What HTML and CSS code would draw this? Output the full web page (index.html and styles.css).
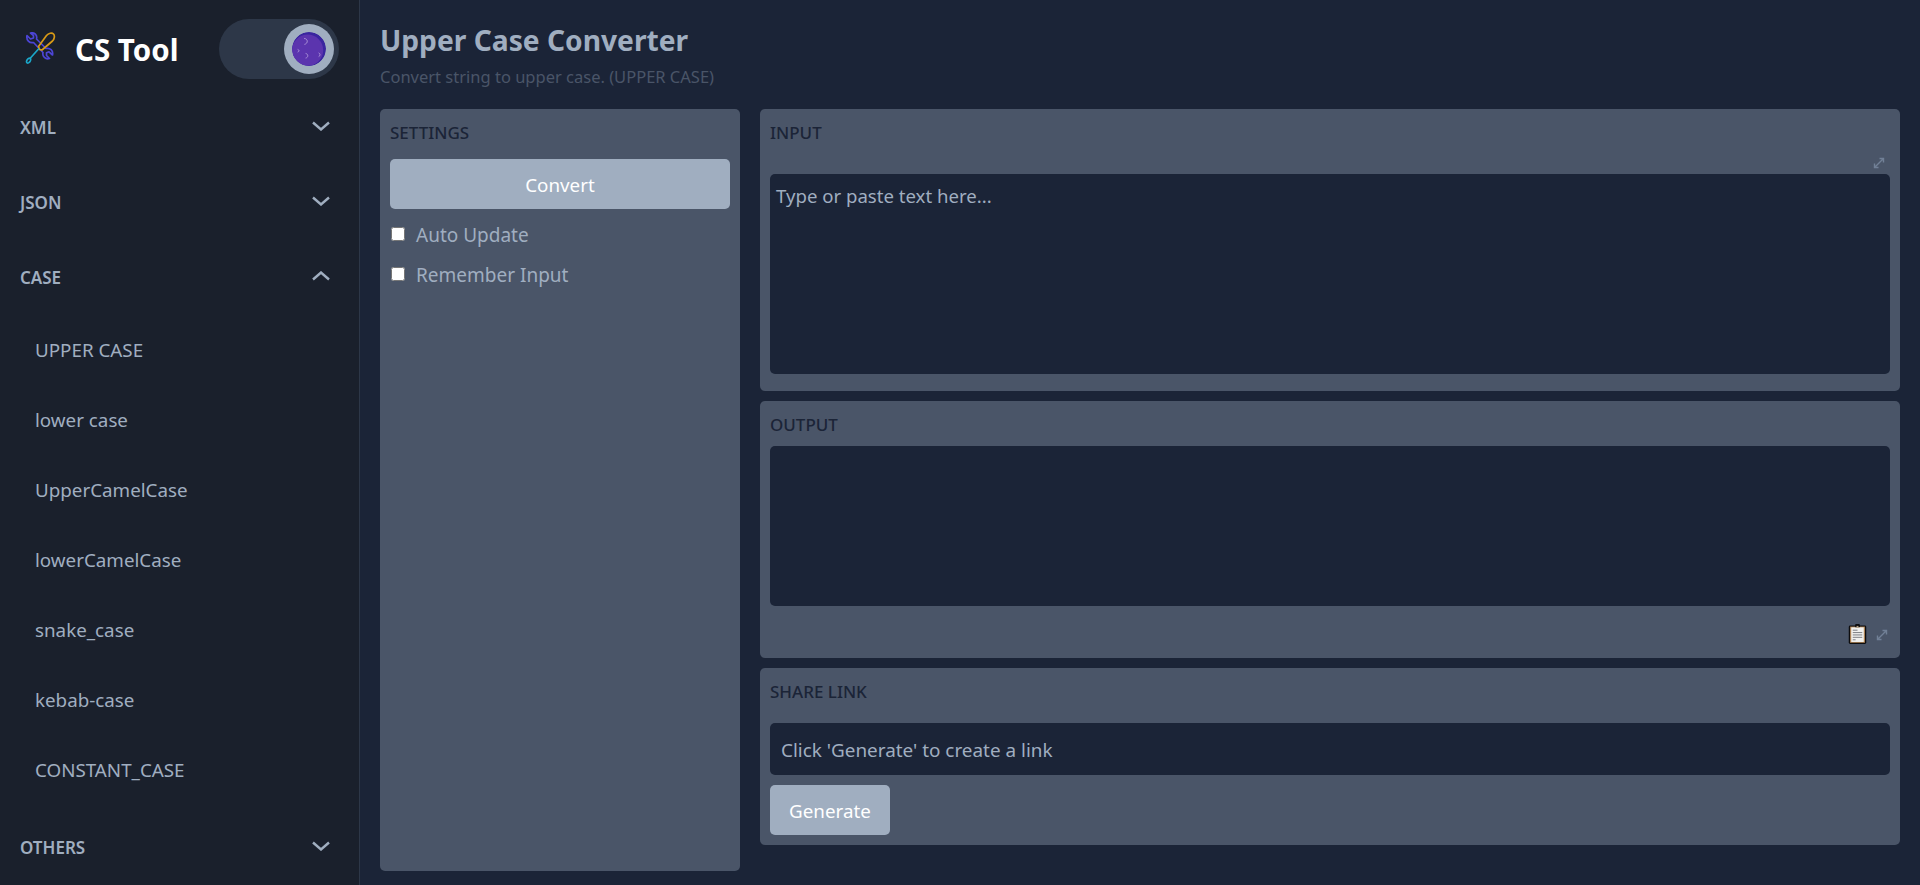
FILE: index.html
```html
<!DOCTYPE html>
<html lang="en">
<head>
    <meta charset="UTF-8">
    <meta name="viewport" content="width=device-width, initial-scale=1.0">
    <title>Upper Case Converter</title>
    <link rel="stylesheet" href="styles.css">
</head>
<body>

    <!-- Sidebar -->
    <aside class="sidebar">
        <div class="brand">
            <svg class="brand-icon" viewBox="0 0 32 34" fill="none" stroke-width="1.7" stroke-linecap="round" stroke-linejoin="round">
                <path d="M3 3.5 L6.5 7 L9.5 6 L9.5 3.5 L6.5 1 C10.5 0 13.5 3 12.5 7 L22 16.5 C26 15.5 29.5 18.5 28.5 23 L25 19.8 L22.5 20.8 L22.5 23.5 L25.5 26.5 C21.5 27.8 18 24.5 19 20.5 L9.5 10.5 C5.5 11.5 2 8 3 3.5 Z" stroke="#4c45d6"/>
                <path d="M15.5 17.5 L14.5 14.5 L22.5 3.5 C24.5 1 28 0.5 29.5 2 C31 3.5 30.5 7 28.5 9 L18 18 Z" stroke="#d99a16"/>
                <path d="M14.5 17 L6 26.5 M6 26 C4.5 26 2.5 28 2.5 29.5 C2.5 31 4 31.5 5 30.5 C6.5 29.5 7 27.5 6.5 26.5" stroke="#1ba6c9"/>
            </svg>
            <span class="brand-name">CS Tool</span>
            <div class="theme-toggle">
                <div class="knob">
                    <svg class="moon" viewBox="0 0 34 34">
                        <circle cx="17" cy="17" r="17" fill="#3a259f"/>
                        <circle cx="15.6" cy="18.2" r="15.6" fill="#5b34ae"/>
                        <g fill="none" stroke="#a88fd6" stroke-width="1" stroke-linecap="round">
                            <path d="M12.5 6.5 C16 6.5 16.5 11.5 12.8 12.3"/>
                            <path d="M6 17.5 C7.5 18 7.5 19.5 6 20"/>
                            <path d="M14 21.5 C16.5 22 16.5 25.5 14 26"/>
                            <path d="M27 21 C28.5 21.5 28.5 24 27 24.5"/>
                        </g>
                    </svg>
                </div>
            </div>
        </div>

        <nav>
            <div class="nav-head"><span>XML</span>
                <svg class="chev" viewBox="0 0 18 10"><path d="M1 1.5 L9 8.5 L17 1.5"/></svg>
            </div>
            <div class="nav-head"><span>JSON</span>
                <svg class="chev" viewBox="0 0 18 10"><path d="M1 1.5 L9 8.5 L17 1.5"/></svg>
            </div>
            <div class="nav-head"><span>CASE</span>
                <svg class="chev" viewBox="0 0 18 10"><path d="M1 8.5 L9 1.5 L17 8.5"/></svg>
            </div>
            <ul class="nav-list">
                <li><a href="#">UPPER CASE</a></li>
                <li><a href="#">lower case</a></li>
                <li><a href="#">UpperCamelCase</a></li>
                <li><a href="#">lowerCamelCase</a></li>
                <li><a href="#">snake_case</a></li>
                <li><a href="#">kebab-case</a></li>
                <li><a href="#">CONSTANT_CASE</a></li>
            </ul>
            <div class="nav-head nav-head-last"><span>OTHERS</span>
                <svg class="chev" viewBox="0 0 18 10"><path d="M1 1.5 L9 8.5 L17 1.5"/></svg>
            </div>
        </nav>
    </aside>

    <!-- Main content -->
    <main class="content">
        <h1>Upper Case Converter</h1>
        <p class="subtitle">Convert string to upper case. (UPPER CASE)</p>

        <div class="tool-grid">
            <section class="panel settings">
                <h2>SETTINGS</h2>
                <button class="btn btn-wide" type="button">Convert</button>
                <label class="check"><input type="checkbox">Auto Update</label>
                <label class="check"><input type="checkbox">Remember Input</label>
            </section>

            <div class="stack">
                <section class="panel input-panel">
                    <h2>INPUT</h2>
                    <div class="tool-row tool-row-top">
                        <svg class="expand" viewBox="0 0 12 12"><path d="M1.5 10.5 L10.5 1.5 M6.5 1.5 H10.5 V5.5 M1.5 6.5 V10.5 H5.5"/></svg>
                    </div>
                    <textarea class="field input-text" placeholder="Type or paste text here..."></textarea>
                </section>

                <section class="panel output-panel">
                    <h2>OUTPUT</h2>
                    <textarea class="field output-text"></textarea>
                    <div class="tool-row tool-row-bottom">
                        <svg class="clipboard" viewBox="0 0 20 22">
                            <rect x="0.8" y="2" width="18.4" height="19.4" rx="1.5" fill="#0d0d0f"/>
                            <rect x="2.2" y="3.2" width="15.6" height="17" fill="#b98d5c"/>
                            <rect x="3.4" y="4" width="13.2" height="15.4" fill="#f1f1ef"/>
                            <rect x="7.5" y="0.5" width="5" height="3.5" rx="1" fill="#0d0d0f"/>
                            <rect x="9" y="2.5" width="2" height="2" fill="#b9a58a"/>
                            <path d="M5 7 H10 M5 9.5 H15 M5 12 H15 M5 14.5 H15" stroke="#77797d" stroke-width="1"/>
                            <path d="M5 17 H8" stroke="#9a9da3" stroke-width="1.4"/>
                        </svg>
                        <svg class="expand" viewBox="0 0 12 12"><path d="M1.5 10.5 L10.5 1.5 M6.5 1.5 H10.5 V5.5 M1.5 6.5 V10.5 H5.5"/></svg>
                    </div>
                </section>

                <section class="panel share-panel">
                    <h2>SHARE LINK</h2>
                    <input class="field share-link" type="text" readonly value="Click 'Generate' to create a link">
                    <button class="btn btn-small" type="button">Generate</button>
                </section>
            </div>
        </div>
    </main>

</body>
</html>
```

FILE: styles.css
```css
* {
    margin: 0;
    padding: 0;
    box-sizing: border-box;
}

body {
    display: flex;
    height: 885px;
    overflow: hidden;
    font-family: "Noto Sans", "Open Sans", sans-serif;
    background-color: #1b2437;
    color: #a0aec0;
}

/* Sidebar */
.sidebar {
    width: 360px;
    flex-shrink: 0;
    background-color: #1a202c;
    border-right: 1px solid #2d3748;
    overflow: hidden;
}

.brand {
    display: flex;
    align-items: center;
    height: 90px;
    padding-top: 8px;
    padding-left: 24px;
}

.brand-icon {
    width: 32px;
    height: 34px;
    margin-right: 19px;
}

.brand-name {
    font-size: 29.5px;
    font-weight: 700;
    color: #fff;
}

.theme-toggle {
    display: flex;
    align-items: center;
    justify-content: flex-end;
    width: 120px;
    height: 60px;
    margin-left: auto;
    margin-right: 20px;
    padding-right: 5px;
    border-radius: 30px;
    background-color: #2d3748;
}

.knob {
    display: flex;
    align-items: center;
    justify-content: center;
    width: 50px;
    height: 50px;
    border-radius: 50%;
    background-color: #a0aec0;
}

.moon {
    width: 34px;
    height: 34px;
    border-radius: 50%;
}

.nav-head {
    display: flex;
    align-items: center;
    justify-content: space-between;
    height: 75px;
    padding: 0 29px 0 20px;
    font-size: 17px;
    font-weight: 600;
}

.nav-head-last {
    margin-top: 5px;
}

.chev {
    width: 18px;
    height: 10px;
    margin-bottom: 4px;
    fill: none;
    stroke: #a0aec0;
    stroke-width: 2.4;
}

.nav-list {
    list-style-type: none;
}

.nav-list li {
    height: 70px;
    line-height: 70px;
    padding-left: 35px;
    font-size: 18.8px;
}

.nav-list a {
    color: #a0aec0;
    text-decoration: none;
}

/* Main content */
.content {
    flex: 1;
    padding: 20px;
}

h1 {
    font-size: 28.2px;
    font-weight: 700;
    line-height: 40px;
    color: #a0aec0;
}

.subtitle {
    margin-top: 5px;
    font-size: 16.5px;
    line-height: 24px;
    color: #4a5568;
}

.tool-grid {
    display: grid;
    grid-template-columns: 360px 1fr;
    gap: 20px;
    margin-top: 20px;
}

.stack {
    display: flex;
    flex-direction: column;
    gap: 10px;
}

.panel {
    padding: 10px;
    border-radius: 5px;
    background-color: #4a5568;
}

.panel h2 {
    height: 26px;
    padding-top: 1px;
    font-size: 17px;
    font-weight: 500;
    line-height: 26px;
    color: #1b2437;
}

.settings {
    height: 762px;
}

.btn {
    display: block;
    height: 50px;
    padding-top: 2px;
    border: none;
    border-radius: 5px;
    background-color: #a0aec0;
    color: #fff;
    font-family: inherit;
    font-size: 18.8px;
    cursor: pointer;
}

.btn-wide {
    width: 100%;
    margin-top: 14px;
    margin-bottom: 6px;
}

.btn-small {
    width: 120px;
    margin-top: 10px;
}

.check {
    display: flex;
    align-items: center;
    height: 40px;
    font-size: 19px;
}

.check input {
    width: 14px;
    height: 14px;
    margin: 0 11px 3px 1px;
}

.field {
    display: block;
    width: 100%;
    border: none;
    border-radius: 5px;
    background-color: #1b2437;
    color: #a0aec0;
    font-family: inherit;
    font-size: 18.9px;
    outline: none;
    resize: none;
}

.field::placeholder {
    color: #a0aec0;
}

.input-text {
    height: 200px;
    margin-bottom: 7px;
    padding: 9px 6px;
    font-size: 18.6px;
}

.output-text {
    height: 160px;
    margin-top: 9px;
}

.share-link {
    height: 52px;
    margin-top: 19px;
    padding: 2px 11px 0;
}

.tool-row {
    display: flex;
    align-items: flex-end;
    justify-content: flex-end;
}

.tool-row-top {
    height: 29px;
    padding-right: 5px;
    padding-bottom: 5px;
}

.tool-row-bottom {
    height: 42px;
    gap: 9px;
    padding-right: 2px;
    padding-bottom: 3px;
}

.tool-row-bottom .expand {
    margin-bottom: 4px;
}

.expand {
    width: 12px;
    height: 12px;
    fill: none;
    stroke: #718096;
    stroke-width: 1.4;
}

.clipboard {
    width: 19px;
    height: 22px;
}
```
